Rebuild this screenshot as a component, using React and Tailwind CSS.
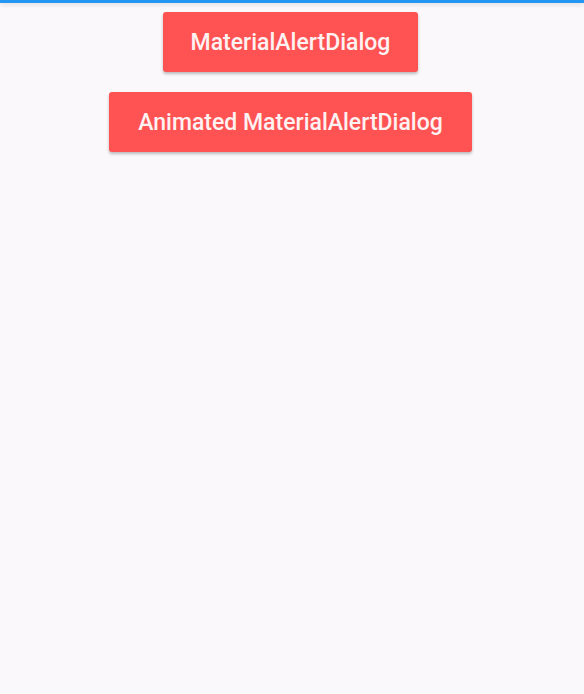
export default function App() {
  return (
    <div className="min-h-[694px] bg-[#faf8fb]" style={{ fontFamily: 'Roboto, sans-serif' }}>
      {/* Top bar */}
      <div className="h-[3px] bg-[#2196f3] shadow-[0_2px_4px_rgba(0,0,0,0.12)]" />

      <div className="flex flex-col items-center gap-5 pt-[9px] pr-[3px]">
        <button className="h-[60px] px-[28px] pt-[2px] rounded-[3px] bg-[#ff5252] text-[23px] font-medium text-[#fdf2f2] shadow-[0_2px_3px_rgba(0,0,0,0.25)]">
          MaterialAlertDialog
        </button>
        <button className="h-[60px] px-[29px] pt-[2px] rounded-[3px] bg-[#ff5252] text-[23px] font-medium text-[#fdf2f2] shadow-[0_2px_3px_rgba(0,0,0,0.25)]">
          Animated MaterialAlertDialog
        </button>
      </div>
    </div>
  );
}
